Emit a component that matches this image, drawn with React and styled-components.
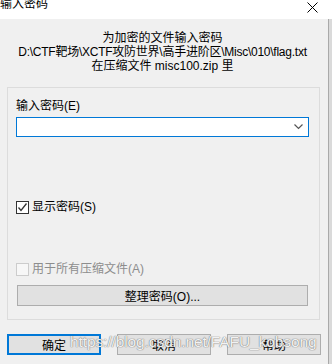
import styled, { createGlobalStyle } from 'styled-components';

const GlobalStyle = createGlobalStyle`
  html, body {
    margin: 0;
    padding: 0;
    background: #f0f0f0;
  }
  body {
    font-family: "Liberation Sans", "Noto Sans CJK SC", sans-serif;
    font-size: 12px;
    color: #000;
  }
`;

const Window = styled.div`
  position: relative;
  width: 332px;
  height: 364px;
  overflow: hidden;
  background: #f0f0f0;
`;

const TitleBar = styled.div`
  height: 19px;
  background: #fff;
  display: flex;
  justify-content: space-between;
  align-items: flex-start;
  overflow: hidden;
`;

const Title = styled.div`
  font-size: 12px;
  line-height: 12px;
  margin-top: -2px;
`;

const Close = styled.div`
  width: 13px;
  height: 13px;
  margin: 1px 13px 0 0;
`;

const Body = styled.div`
  display: flex;
  height: 345px;
`;

const Content = styled.div`
  flex: 1;
  display: flex;
  flex-direction: column;
`;

const EdgeStrip = styled.div`
  width: 3px;
  border-left: 1px solid #a9a9a9;
  background: #dadada;
`;

const Message = styled.div`
  text-align: center;
  padding-top: 12px;
  padding-right: 3px;
  line-height: 14px;
`;

const PathLine = styled.div`
  letter-spacing: -0.25px;
`;

const GroupBox = styled.div`
  margin: 14px 0 0 7px;
  width: 313px;
  height: 233px;
  border: 1px solid #dcdcdc;
  display: flex;
  flex-direction: column;
  padding: 0 10px 0 8px;
  box-sizing: border-box;
`;

const Label = styled.div`
  margin-top: 10px;
  line-height: 16px;
`;

const Combo = styled.div`
  margin-top: 3px;
  height: 20px;
  box-sizing: border-box;
  border: 1px solid #0078d7;
  background: #fff;
  display: flex;
  justify-content: flex-end;
  align-items: center;
  padding-right: 5px;
`;

const Check = styled.label`
  display: flex;
  align-items: center;
  gap: 3px;
  margin-top: ${(p) => p.$top}px;
  line-height: 16px;
  color: ${(p) => (p.$disabled ? '#8d8d8d' : '#000')};
`;

const Box = styled.span`
  width: 13px;
  height: 13px;
  box-sizing: border-box;
  border: 1px solid ${(p) => (p.$disabled ? '#cccccc' : '#333')};
  background: ${(p) => (p.$disabled ? '#f7f7f7' : '#fff')};
  display: flex;
  align-items: center;
  justify-content: center;
`;

const Button = styled.div`
  height: 21px;
  box-sizing: border-box;
  border: ${(p) => (p.$default ? '2px solid #0078d7' : '1px solid #adadad')};
  background: #e1e1e1;
  display: flex;
  align-items: center;
  justify-content: center;
  width: ${(p) => p.$w || 'auto'};
`;

const WideButton = styled(Button)`
  margin-top: 8px;
  margin-left: 1px;
  margin-right: 1px;
`;

const ButtonRow = styled.div`
  display: flex;
  gap: 16px;
  margin: 14px 0 0 7px;
`;

const Watermark = styled.div`
  position: absolute;
  left: 70px;
  top: 333px;
  font-family: "Liberation Sans", sans-serif;
  font-size: 15.5px;
  letter-spacing: -0.1px;
  color: rgba(255, 255, 255, 0.92);
  text-shadow: 0 0 1px rgba(110, 110, 110, 0.9), 0 0 1px rgba(110, 110, 110, 0.9);
  pointer-events: none;
  white-space: nowrap;
`;

const App = () => {
  return (
    <Window>
      <GlobalStyle />
      <TitleBar>
        <Title>输入密码</Title>
        <Close>
          <svg width="13" height="13" viewBox="0 0 13 13">
            <path d="M1.5 1.5 L11.5 11.5 M11.5 1.5 L1.5 11.5" stroke="#000" strokeWidth="1" fill="none" />
          </svg>
        </Close>
      </TitleBar>
      <Body>
        <Content>
          <Message>
            <div>为加密的文件输入密码</div>
            <PathLine>D:\CTF靶场\XCTF攻防世界\高手进阶区\Misc\010\flag.txt</PathLine>
            <div>在压缩文件 misc100.zip 里</div>
          </Message>
          <GroupBox>
            <Label>输入密码(E)</Label>
            <Combo>
              <svg width="9" height="6" viewBox="0 0 9 6">
                <path d="M0.5 0.5 L4.5 4.5 L8.5 0.5" stroke="#555" strokeWidth="1.2" fill="none" />
              </svg>
            </Combo>
            <Check $top={62}>
              <Box>
                <svg width="11" height="11" viewBox="0 0 11 11">
                  <path d="M1.5 5.5 L4 8.5 L9.5 1.5" stroke="#333" strokeWidth="1.3" fill="none" />
                </svg>
              </Box>
              显示密码(S)
            </Check>
            <Check $top={46} $disabled>
              <Box $disabled />
              用于所有压缩文件(A)
            </Check>
            <WideButton>整理密码(O)...</WideButton>
          </GroupBox>
          <ButtonRow>
            <Button $default $w="94px">确定</Button>
            <Button $w="94px">取消</Button>
            <Button $w="94px">帮助</Button>
          </ButtonRow>
        </Content>
        <EdgeStrip />
      </Body>
      <Watermark>https://blog.csdn.net/FAFU_kobsong</Watermark>
    </Window>
  );
};

export default App;
